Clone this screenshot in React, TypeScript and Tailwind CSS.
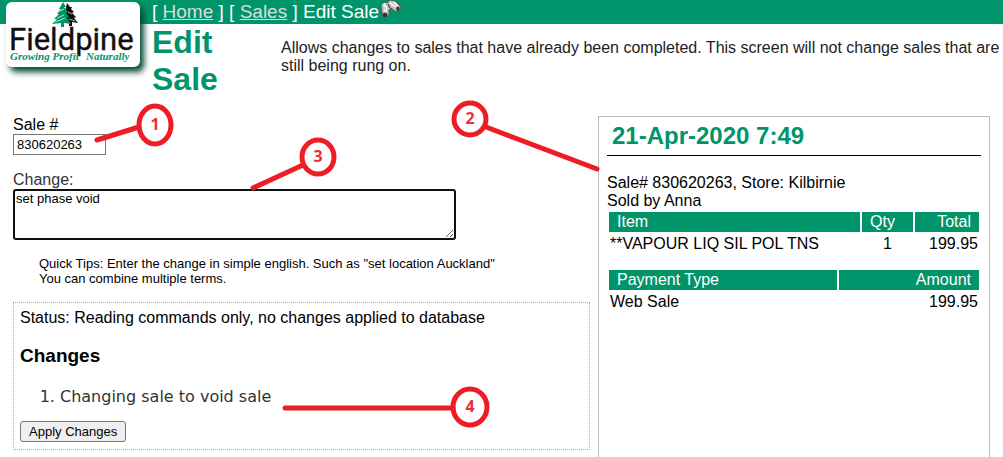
import { useState } from 'react'

// ─── Data ────────────────────────────────────────────────────────

const items = [{ name: '**VAPOUR LIQ SIL POL TNS', qty: 1, total: '199.95' }]
const payments = [{ type: 'Web Sale', amount: '199.95' }]
const changes = ['Changing sale to void sale']

const callouts = [
  { n: 1, cx: 155, cy: 125, rx: 16, ry: 19, x: 97, y: 140, ex: 139, ey: 127 },
  { n: 2, cx: 470, cy: 119, rx: 16, ry: 16, x: 597, y: 169, ex: 486, ey: 127 },
  { n: 3, cx: 318, cy: 157, rx: 16, ry: 17, x: 253, y: 188, ex: 303, ey: 165 },
  { n: 4, cx: 470, cy: 407, rx: 17, ry: 18, x: 285, y: 408, ex: 453, ey: 408 },
]

export default function App() {
  const [saleNo, setSaleNo] = useState('830620263')
  const [change, setChange] = useState('set phase void')

  return (
    <div className="relative flex min-h-screen flex-col overflow-hidden bg-white font-['Liberation_Sans',Arial,sans-serif] text-base leading-[18px] text-black">
      <header className="flex h-6 items-center bg-[#00946a] pl-[152px] text-[19px] leading-6 text-white">
        <nav className="whitespace-pre">
          [ <a href="#home" className="text-[#dddddd] underline">Home</a> ] [ <a href="#sales" className="text-[#dddddd] underline">Sales</a> ] Edit Sale
        </nav>
        <Binoculars />
      </header>

      <Logo />

      <div className="flex pl-[152px]">
        <h1 className="w-[129px] pr-12 text-[32px] leading-[37px] font-bold text-[#00946a]">Edit Sale</h1>
        <p className="flex-1 pt-[15px] text-[#222222]">
          Allows changes to sales that have already been completed. This screen will not change sales that are still being rung on.
        </p>
      </div>

      <main className="grid flex-1 grid-cols-[577fr_392fr] gap-2 px-[13px] pt-[18px]">
        <section>
          <label htmlFor="sale" className="block w-fit">Sale #</label>
          <input
            id="sale"
            value={saleNo}
            onChange={e => setSaleNo(e.target.value)}
            className="block h-[21px] w-[93px] border border-[#767676] px-[3px] text-[13px] outline-none"
          />

          <label htmlFor="change" className="mt-4 block w-fit text-[#333333]">Change:</label>
          <textarea
            id="change"
            value={change}
            onChange={e => setChange(e.target.value)}
            className="block h-[51px] w-[443px] resize rounded-[3px] border-2 border-[#101010] px-px text-[13px] leading-4 outline-none"
          />

          <p className="mt-4 pl-[26px] text-[13px] leading-[15px]">
            Quick Tips: Enter the change in simple english. Such as "set location Auckland"
            <br />
            You can combine multiple terms.
          </p>

          <div className="mt-4 border border-dotted border-[#aaaaaa] px-[6px] pt-[6px] pb-[7px]">
            <p>Status: Reading commands only, no changes applied to database</p>
            <h2 className="mt-[18px] text-[19px] leading-[22px] font-bold">Changes</h2>
            <ol className="mt-5 list-decimal pl-10 font-['DejaVu_Sans',Verdana,sans-serif] leading-5 text-[#333333]">
              {changes.map(c => (
                <li key={c}>{c}</li>
              ))}
            </ol>
            <button type="button" className="mt-[14px] block h-[21px] rounded-[3px] border border-[#767676] bg-[#efefef] px-2 text-[13px] leading-4">
              Apply Changes
            </button>
          </div>
        </section>

        <section className="border border-b-0 border-[#bbbbbb] px-2 pt-1">
          <h2 className="border-b border-black pb-[5px] pl-[5px] text-[24px] leading-[29px] font-bold text-[#00946a]">21-Apr-2020 7:49</h2>
          <p className="mt-[18px]">
            Sale# 830620263, Store: Kilbirnie
            <br />
            Sold by Anna
          </p>

          <table className="mt-[2px] w-full border-separate border-spacing-x-[2px]">
            <thead>
              <tr className="text-white">
                <th className="h-5 bg-[#00946a] px-2 text-left font-normal">Item</th>
                <th className="w-[51px] bg-[#00946a] px-2 text-left font-normal">Qty</th>
                <th className="w-16 bg-[#00946a] px-2 text-right font-normal">Total</th>
              </tr>
            </thead>
            <tbody>
              {items.map(i => (
                <tr key={i.name}>
                  <td className="h-6 px-px">{i.name}</td>
                  <td className="text-center">{i.qty}</td>
                  <td className="px-px text-right">{i.total}</td>
                </tr>
              ))}
            </tbody>
          </table>

          <table className="mt-[14px] w-full border-separate border-spacing-x-[2px]">
            <thead>
              <tr className="text-white">
                <th className="h-5 bg-[#00946a] px-2 text-left font-normal">Payment Type</th>
                <th className="w-[140px] bg-[#00946a] px-2 text-right font-normal">Amount</th>
              </tr>
            </thead>
            <tbody>
              {payments.map(p => (
                <tr key={p.type}>
                  <td className="h-6 px-px">{p.type}</td>
                  <td className="px-px text-right">{p.amount}</td>
                </tr>
              ))}
            </tbody>
          </table>
        </section>
      </main>

      <Callouts />
    </div>
  )
}

// ─── Helper Components ───────────────────────────────────────────

function Logo() {
  return (
    <div className="absolute top-[2px] left-[6px] h-[65px] w-[134px] rounded-md bg-white shadow-[4px_5px_6px_#004a35]">
      <svg viewBox="6 2 134 65" className="h-full w-full" role="img" aria-label="Fieldpine">
        {/* back tree */}
        <path d="M67 3l3 4 2 0-1 2 3 3-2 1 4 4-2 1 4 5-6-1 0 4-3 0 0-4-6 0z" fill="#111" />
        {/* front tree */}
        <path d="M63 2l3 5-2 0 4 5-2 1 3 4-2 1 4 6-7-1 0 4-3 0 0-4-9 1 5-5-3 0 5-5-2 0 4-5-2 0z" fill="#00946a" />
        <path d="M57 18l7-3M55 22l10-4M60 11l4-2M68 12l4 2M69 19l6 2" stroke="#fff" strokeWidth="0.7" />
        <text x="9" y="50" fontSize="31" fontFamily="Roboto, sans-serif" fill="#111" stroke="#111" strokeWidth="0.4">Fieldpine</text>
        <g fontSize="11" fontWeight="bold" fontStyle="italic" fontFamily="Liberation Serif, serif" fill="#00946a">
          <text x="10" y="60">Growing Profit</text>
          <text x="86" y="60">Naturally</text>
        </g>
      </svg>
    </div>
  )
}

function Binoculars() {
  return (
    <svg viewBox="0 0 22 20" className="ml-px h-5 w-[22px] self-start" aria-hidden="true">
      <path d="M1 5L4 2 7 3 10 0 15 1 21 7 20 11 16 12 11 8 9 10 9 15 6 18 2 17 2 12z" fill="#c4c4c4" stroke="#4a4a4a" strokeWidth="0.8" />
      <path d="M4 4l3 5M10 3l6 4M14 2l4 4M4 10l3 1" stroke="#fff" strokeWidth="1.5" />
      <path d="M8 4l2 4" stroke="#444" strokeWidth="1.3" />
      <ellipse cx="5" cy="15" rx="2.6" ry="2.2" fill="#333" />
      <ellipse cx="18" cy="9" rx="2" ry="2.4" fill="#444" />
    </svg>
  )
}

function Callouts() {
  return (
    <svg viewBox="0 0 1003 457" className="pointer-events-none absolute top-0 left-0 h-[457px] w-[1003px]" fill="none">
      {callouts.map(c => (
        <g key={c.n} stroke="#ee1c25" strokeWidth="5" strokeLinecap="round">
          <line x1={c.x} y1={c.y} x2={c.ex} y2={c.ey} />
          <ellipse cx={c.cx} cy={c.cy} rx={c.rx} ry={c.ry} />
          <text x={c.cx} y={c.cy + 5} textAnchor="middle" fontSize="16" fontWeight="bold" fontFamily="Open Sans, sans-serif" fill="#e8323a" stroke="none">{c.n}</text>
        </g>
      ))}
    </svg>
  )
}
